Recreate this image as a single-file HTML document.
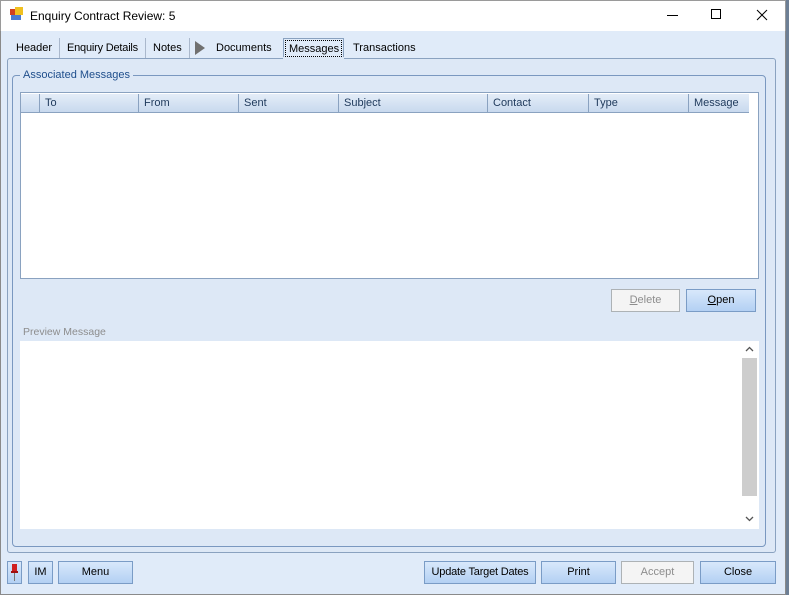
<!DOCTYPE html><html><head><style>
body{margin:0;width:789px;height:595px;overflow:hidden;background:#6d7f95;font-family:"Liberation Sans",sans-serif;font-size:11px;position:relative}
.a{position:absolute;box-sizing:border-box}
.btn{position:absolute;box-sizing:border-box;border:1px solid #7a9cc6;background:linear-gradient(#d8e8fb,#b3d0f3);text-align:center;line-height:20px;color:#000}
.dis{border-color:#adb2b5;background:#f4f4f4;color:#8d8d8d}
.th{position:absolute;top:0;height:18px;line-height:19px;color:#1e395b;border-left:1px solid #8aa2c0;padding-left:5px}
</style></head><body>
<div class="a" style="left:0;top:0;width:786px;height:595px;background:#e0ebf9;border:1px solid #8a8a8a;border-top:none"></div>
<div class="a" style="left:0;top:0;width:786px;height:31px;background:#fff;border:1px solid #9a9a9a;border-bottom:none"></div>
<div class="a" style="left:10px;top:9px;width:6px;height:6px;background:#d04020"></div>
<div class="a" style="left:15px;top:7px;width:8px;height:8px;background:#f0c020"></div>
<div class="a" style="left:11px;top:15px;width:10px;height:5px;background:#4a7ad0"></div>
<div class="a" style="left:30px;top:9px;font-size:12px">Enquiry Contract Review: 5</div>
<div class="a" style="left:667px;top:15px;width:11px;height:1px;background:#000"></div>
<div class="a" style="left:711px;top:9px;width:10px;height:10px;border:1px solid #000"></div>
<svg class="a" style="left:756px;top:9px" width="12" height="12"><path d="M1 1L11 11M11 1L1 11" stroke="#000" stroke-width="1"/></svg>
<!-- tabs -->
<div class="a" style="left:16px;top:42px">Header</div>
<div class="a" style="left:59px;top:38px;width:1px;height:20px;background:#aab8cc"></div>
<div class="a" style="left:67px;top:42px;letter-spacing:-0.2px">Enquiry Details</div>
<div class="a" style="left:145px;top:38px;width:1px;height:20px;background:#aab8cc"></div>
<div class="a" style="left:153px;top:42px">Notes</div>
<div class="a" style="left:189px;top:38px;width:1px;height:20px;background:#aab8cc"></div>
<div class="a" style="left:195px;top:41px;width:0;height:0;border-left:10px solid #707070;border-top:7px solid transparent;border-bottom:7px solid transparent"></div>
<div class="a" style="left:216px;top:42px">Documents</div>
<div class="a" style="left:283px;top:38px;width:61px;height:21px;background:#e0ebf9;border:1px solid #8aa2c0;border-bottom:none"></div>
<div class="a" style="left:285px;top:40px;width:57px;height:17px;border:1px dotted #000"></div>
<div class="a" style="left:289px;top:43px">Messages</div>
<div class="a" style="left:353px;top:42px">Transactions</div>
<div class="a" style="left:7px;top:58px;width:769px;height:495px;border:1px solid #8aa2c0;border-radius:3px;background:#dde8f6"></div>
<div class="a" style="left:283px;top:57px;width:61px;height:3px;background:#dde8f6"></div>
<div class="a" style="left:12px;top:75px;width:754px;height:472px;border:1px solid #7a98c0;border-radius:4px"></div>
<div class="a" style="left:20px;top:69px;padding:0 3px;background:#dde8f6;color:#1e4e8c">Associated Messages</div>
<!-- grid -->
<div class="a" style="left:20px;top:92px;width:739px;height:187px;background:#fff;border:1px solid #8aa2c0"></div>
<div class="a" style="left:21px;top:94px;width:728px;height:19px;background:linear-gradient(#e4edf8,#c8d9ee);border-bottom:1px solid #8aa2c0">
<div class="th" style="left:18px;width:100px">To</div>
<div class="th" style="left:117px">From</div>
<div class="th" style="left:217px">Sent</div>
<div class="th" style="left:317px">Subject</div>
<div class="th" style="left:466px">Contact</div>
<div class="th" style="left:567px">Type</div>
<div class="th" style="left:667px">Message</div>
</div>
<div class="btn dis" style="left:611px;top:289px;width:69px;height:23px"><u>D</u>elete</div>
<div class="btn" style="left:686px;top:289px;width:70px;height:23px"><u>O</u>pen</div>
<div class="a" style="left:23px;top:326px;color:#8d8d8d;font-size:10.5px">Preview Message</div>
<div class="a" style="left:20px;top:341px;width:739px;height:188px;background:#fff"></div>
<div class="a" style="left:742px;top:358px;width:15px;height:138px;background:#cdcdcd"></div>
<svg class="a" style="left:745px;top:346px" width="9" height="6"><path d="M1 5L4.5 1.5L8 5" stroke="#555" fill="none" stroke-width="1.3"/></svg>
<svg class="a" style="left:745px;top:516px" width="9" height="6"><path d="M1 1L4.5 4.5L8 1" stroke="#555" fill="none" stroke-width="1.3"/></svg>
<!-- bottom -->
<div class="btn" style="left:7px;top:561px;width:15px;height:23px"></div>
<svg class="a" style="left:10px;top:563px" width="9" height="19"><rect x="2" y="1" width="5" height="7" fill="#d02020"/><rect x="1" y="8" width="7" height="2" fill="#a01010"/><path d="M4.5 10V18" stroke="#777"/></svg>
<div class="btn" style="left:28px;top:561px;width:25px;height:23px">IM</div>
<div class="btn" style="left:58px;top:561px;width:75px;height:23px">Menu</div>
<div class="btn" style="left:424px;top:561px;width:112px;height:23px;letter-spacing:-0.2px">Update Target Dates</div>
<div class="btn" style="left:541px;top:561px;width:75px;height:23px">Print</div>
<div class="btn dis" style="left:621px;top:561px;width:73px;height:23px">Accept</div>
<div class="btn" style="left:700px;top:561px;width:76px;height:23px">Close</div>
</body></html>
